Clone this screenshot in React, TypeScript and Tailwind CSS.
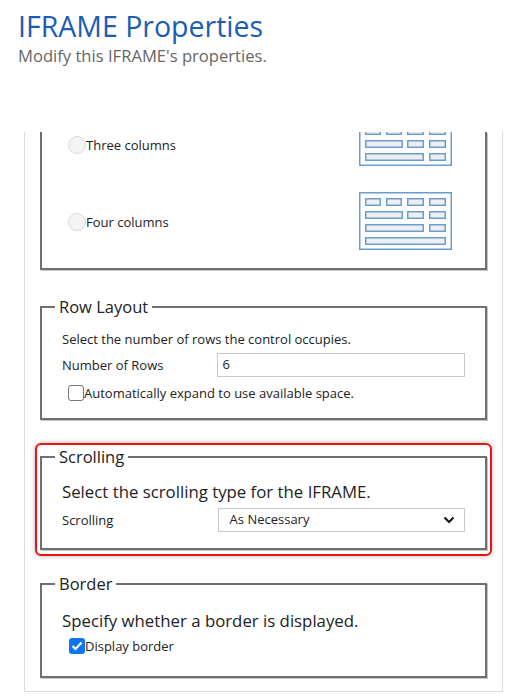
import React from "react";

const font = { fontFamily: '"Segoe UI", "Open Sans", "Noto Sans", sans-serif' };

function GridIcon({ variant }: { variant: "three" | "four" }) {
  const rows: [number, number][][] =
    variant === "four"
      ? [
          [[6, 21], [27, 42], [48, 64], [70, 86]],
          [[6, 43], [48, 64], [70, 86]],
          [[6, 64], [70, 86]],
          [[6, 86]],
        ]
      : [
          [[6, 86]],
          [[6, 21], [27, 42], [48, 64], [70, 86]],
          [[6, 43], [48, 64], [70, 86]],
          [[6, 64], [70, 86]],
        ];
  return (
    <svg width="93" height="58" viewBox="0 0 93 58" className="block shrink-0">
      <rect x="0.75" y="0.75" width="91.5" height="56.5" fill="#fff" stroke="#6a9dd2" strokeWidth="1.5" />
      {rows.map((r, ri) =>
        r.map(([a, b], i) => (
          <rect
            key={`${ri}-${i}`}
            x={a + 0.75}
            y={6 + ri * 13 + 0.75}
            width={b - a - 0.5}
            height={6.5}
            fill="#eeeeee"
            stroke="#6a9dd2"
            strokeWidth="1.5"
          />
        ))
      )}
    </svg>
  );
}

function Radio() {
  return <span className="block w-[18px] h-[18px] rounded-full border border-[#d9d9d9] bg-[#f4f4f4] shrink-0" />;
}

function Legend({ children }: { children: React.ReactNode }) {
  return (
    <legend className="ml-[13px] px-[4px] text-[16.5px] leading-[22px] text-[#222]">{children}</legend>
  );
}

const fsClass = "border-2 border-[#6f6f6f] shadow-[1px_1px_0_#c4c4c4] p-0 m-0 min-w-0";

export default function App() {
  return (
    <div className="w-[507px] h-[697px] bg-white overflow-hidden text-[#222]" style={font}>
      <div className="h-[132px] pl-[18px] pt-[7px]">
        <h1 className="text-[28.5px] leading-[38px] text-[#1b5db6] font-normal">IFRAME Properties</h1>
        <p className="text-[16.6px] leading-[22px] text-[#666]">Modify this IFRAME's properties.</p>
      </div>
      <div className="ml-[24px] w-[479px] border-x border-b border-[#dcdcdc] px-[15px] pb-[13px]">
        {/* Column layout (scrolled, top clipped) */}
        <div className="border-x-2 border-b-2 border-[#6f6f6f] shadow-[1px_1px_0_#c4c4c4] pb-[18px]">
          <div className="h-[34px] overflow-hidden flex items-end relative">
            <div className="absolute left-[26px] top-[4px] flex items-center">
              <Radio />
              <span className="text-[13px] leading-[18px]">Three columns</span>
            </div>
            <div className="ml-[317px]">
              <GridIcon variant="three" />
            </div>
          </div>
          <div className="mt-[26px] h-[58px] flex items-center">
            <div className="ml-[26px] flex items-center w-[291px] relative top-[1px]">
              <Radio />
              <span className="text-[13px] leading-[18px]">Four columns</span>
            </div>
            <GridIcon variant="four" />
          </div>
        </div>

        {/* Row layout */}
        <fieldset className={`${fsClass} mt-[26px] pb-[13px]`}>
          <Legend>Row Layout</Legend>
          <div className="pl-[20px] pr-[20px]">
            <p className="mt-[12px] text-[13px] leading-[18px]">Select the number of rows the control occupies.</p>
            <div className="mt-[5px] flex items-center h-[24px]">
              <span className="w-[155px] text-[13px] leading-[18px]">Number of Rows</span>
              <div className="w-[249px] h-[24px] border border-[#c8c8c8] flex items-center pl-[5px] text-[13px]">6</div>
            </div>
            <div className="mt-[4px] flex items-center h-[24px] pl-[6px]">
              <span className="block w-[16px] h-[16px] rounded-[3px] border border-[#767676] bg-white" />
              <span className="text-[13px] leading-[18px]">Automatically expand to use available space.</span>
            </div>
          </div>
        </fieldset>

        {/* Scrolling */}
        <div className="mt-[23px] -mx-[5px] border-2 border-[#ee1111] rounded-[6px] shadow-[0_0_5px_rgba(0,0,0,0.3)] px-[3px] pt-[1px] pb-[4px]">
          <fieldset className={`${fsClass} pb-[16px]`}>
            <Legend>Scrolling</Legend>
            <div className="pl-[20px] pr-[20px]">
              <p className="mt-[13px] text-[16.8px] leading-[22px]">Select the scrolling type for the IFRAME.</p>
              <div className="mt-[5px] flex items-center h-[24px]">
                <span className="w-[156px] text-[13px] leading-[18px]">Scrolling</span>
                <div className="w-[248px] h-[24px] border border-[#c8c8c8] flex items-center justify-between pl-[11px] pr-[9px] text-[13px]">
                  <span>As Necessary</span>
                  <svg width="12" height="8" viewBox="0 0 12 8">
                    <path d="M1.5 1.5 L6 6 L10.5 1.5" fill="none" stroke="#111" strokeWidth="2" />
                  </svg>
                </div>
              </div>
            </div>
          </fieldset>
        </div>

        {/* Border */}
        <fieldset className={`${fsClass} mt-[17px] pb-[20px]`}>
          <Legend>Border</Legend>
          <div className="pl-[20px] pr-[20px]">
            <p className="mt-[15px] text-[16.8px] leading-[22px]">Specify whether a border is displayed.</p>
            <div className="mt-[4px] flex items-center h-[20px] pl-[7px]">
              <span className="w-[16px] h-[16px] rounded-[3px] bg-[#0f75f0] flex items-center justify-center">
                <svg width="12" height="10" viewBox="0 0 12 10">
                  <path d="M1.5 5 L4.5 8 L10.5 1.5" fill="none" stroke="#fff" strokeWidth="2.2" />
                </svg>
              </span>
              <span className="text-[13px] leading-[18px]">Display border</span>
            </div>
          </div>
        </fieldset>
      </div>
    </div>
  );
}
